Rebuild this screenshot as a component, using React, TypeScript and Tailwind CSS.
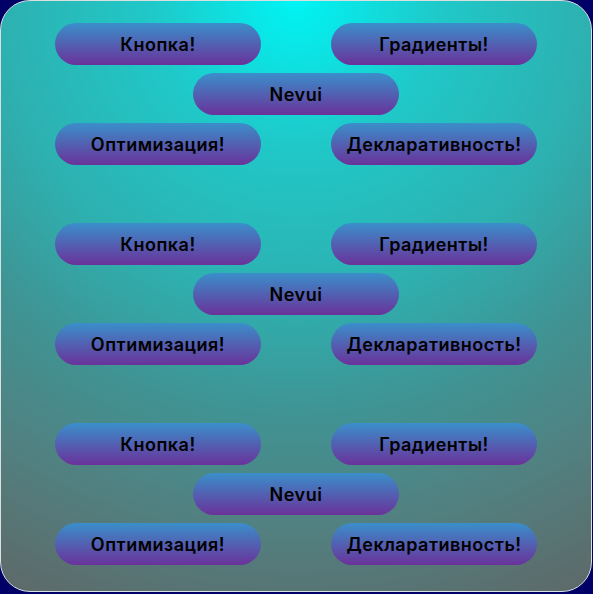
import React from "react";

const Btn: React.FC<{ children: React.ReactNode }> = ({ children }) => (
  <div className="flex h-[42px] w-[206px] items-center justify-center rounded-full bg-[linear-gradient(to_bottom,#3a8fca,#6a329a)] text-[18px] font-semibold tracking-[0.5px] text-black">
    {children}
  </div>
);

const Group: React.FC = () => (
  <div className="flex flex-col gap-[8px]">
    <div className="flex justify-between">
      <Btn>Кнопка!</Btn>
      <Btn>Градиенты!</Btn>
    </div>
    <div className="flex justify-center">
      <Btn>Nevui</Btn>
    </div>
    <div className="flex justify-between">
      <Btn>Оптимизация!</Btn>
      <Btn>Декларативность!</Btn>
    </div>
  </div>
);

export default function App() {
  return (
    <div className="h-[594px] w-[593px] bg-[#000066]" style={{ fontFamily: "Inter, 'Noto Sans', sans-serif" }}>
      <div className="flex h-[592px] w-[592px] flex-col gap-[58px] rounded-[30px] border border-[#d8e0e0] bg-[radial-gradient(circle_farthest-corner_at_50%_0%,#00f4f4_0%,#20c8c8_22%,#2eb0b0_45%,#3f9494_62%,#528080_80%,#5e6868_100%)] px-[54px] pt-[22px]">
        <Group />
        <Group />
        <Group />
      </div>
    </div>
  );
}
